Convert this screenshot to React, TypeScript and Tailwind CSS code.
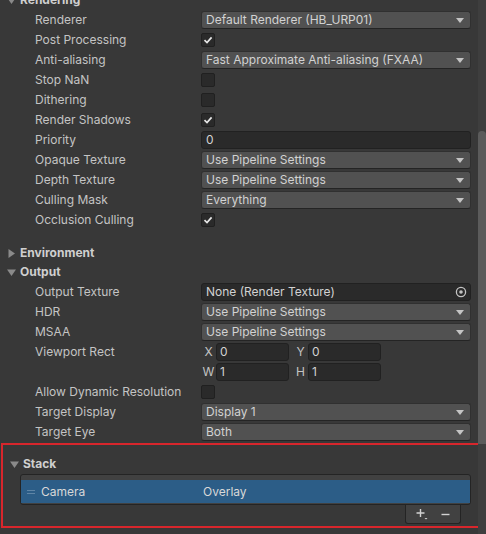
import React from 'react';

const font = { fontFamily: 'Inter, "Noto Sans", sans-serif' };

const Arrow = () => (
  <svg width="8" height="5" viewBox="0 0 8 5" className="shrink-0">
    <path d="M0 0 L8 0 L4 5 Z" fill="#c4c4c4" />
  </svg>
);

const Check = () => (
  <svg width="10" height="10" viewBox="0 0 10 10">
    <path d="M1.5 5.2 L4 7.6 L8.6 2.4" stroke="#e6e6e6" strokeWidth="1.7" fill="none" />
  </svg>
);

const Dropdown = ({ value }: { value: string }) => (
  <div className="flex-1 h-[18px] flex items-center justify-between pl-[4px] pr-[6px] rounded-[3px] bg-[#515151] border border-[#303030] border-b-[#242424] text-[#d2d2d2]">
    <span>{value}</span>
    <Arrow />
  </div>
);

const TextField = ({ value }: { value: string }) => (
  <div className="flex-1 h-[18px] flex items-center pl-[4px] rounded-[3px] bg-[#2a2a2a] border border-[#212121] text-[#d2d2d2]">
    {value}
  </div>
);

const CheckBox = ({ on }: { on?: boolean }) => (
  <div className="w-[14px] h-[14px] flex items-center justify-center rounded-[2px] bg-[#2a2a2a] border border-[#202020]">
    {on && <Check />}
  </div>
);

const Row = ({ label, children }: { label: string; children?: React.ReactNode }) => (
  <div className="h-[20px] flex items-center">
    <div className="w-[201px] pl-[35px] shrink-0 whitespace-nowrap text-[#c4c4c4]">{label}</div>
    <div className="flex-1 flex items-center pr-[7px]">{children}</div>
  </div>
);

const Header = ({ title, open }: { title: string; open?: boolean }) => (
  <div className="h-[20px] flex items-center pl-[7px] gap-[4px]">
    <svg width="9" height="9" viewBox="0 0 9 9">
      {open ? <path d="M0 1.5 L9 1.5 L4.5 8 Z" fill="#8a8a8a" /> : <path d="M1.5 0 L8 4.5 L1.5 9 Z" fill="#8a8a8a" />}
    </svg>
    <span className="font-bold text-[#cfcfcf]">{title}</span>
  </div>
);

const VecField = ({ axis, value }: { axis: string; value: string }) => (
  <div className="flex items-center w-[92px]">
    <span className="w-[15px] text-center text-[#c4c4c4]">{axis}</span>
    <div className="w-[73px] h-[18px] flex items-center pl-[3px] rounded-[3px] bg-[#2a2a2a] border border-[#212121] text-[#d2d2d2]">
      {value}
    </div>
  </div>
);

export default function App() {
  return (
    <div className="w-[486px] h-[534px] bg-[#383838] overflow-hidden flex text-[12px] leading-none" style={font}>
      <div className="w-[478px] shrink-0 flex flex-col">
        <div className="mt-[-10px]">
          <Header title="Rendering" open />
        </div>
        <Row label="Renderer"><Dropdown value="Default Renderer (HB_URP01)" /></Row>
        <Row label="Post Processing"><CheckBox on /></Row>
        <Row label="Anti-aliasing"><Dropdown value="Fast Approximate Anti-aliasing (FXAA)" /></Row>
        <Row label="Stop NaN"><CheckBox /></Row>
        <Row label="Dithering"><CheckBox /></Row>
        <Row label="Render Shadows"><CheckBox on /></Row>
        <Row label="Priority"><TextField value="0" /></Row>
        <Row label="Opaque Texture"><Dropdown value="Use Pipeline Settings" /></Row>
        <Row label="Depth Texture"><Dropdown value="Use Pipeline Settings" /></Row>
        <Row label="Culling Mask"><Dropdown value="Everything" /></Row>
        <Row label="Occlusion Culling"><CheckBox on /></Row>

        <div className="mt-[13px]">
          <Header title="Environment" />
        </div>
        <div className="mt-[-1px]">
          <Header title="Output" open />
        </div>
        <Row label="Output Texture">
          <div className="flex-1 h-[18px] flex items-center justify-between pl-[4px] pr-[3px] rounded-[3px] bg-[#2a2a2a] border border-[#212121] text-[#d2d2d2]">
            <span>None (Render Texture)</span>
            <svg width="12" height="12" viewBox="0 0 12 12">
              <circle cx="6" cy="6" r="4.6" stroke="#c4c4c4" strokeWidth="1.3" fill="none" />
              <circle cx="6" cy="6" r="1.8" fill="#c4c4c4" />
            </svg>
          </div>
        </Row>
        <Row label="HDR"><Dropdown value="Use Pipeline Settings" /></Row>
        <Row label="MSAA"><Dropdown value="Use Pipeline Settings" /></Row>
        <Row label="Viewport Rect">
          <div className="flex items-center">
            <VecField axis="X" value="0" />
            <VecField axis="Y" value="0" />
          </div>
        </Row>
        <Row label="">
          <div className="flex items-center">
            <VecField axis="W" value="1" />
            <VecField axis="H" value="1" />
          </div>
        </Row>
        <Row label="Allow Dynamic Resolution"><CheckBox /></Row>
        <Row label="Target Display"><Dropdown value="Display 1" /></Row>
        <Row label="Target Eye"><Dropdown value="Both" /></Row>

        <div className="mt-[1px] ml-[1px] mr-[-2px] h-[85px] border-2 border-[#d8262c] flex flex-col">
          <div className="mt-[9px]">
            <Header title="Stack" open />
          </div>
          <div className="ml-[17px] mr-[7px] h-[31px] border border-[#242424] rounded-[3px] bg-[#414141] pt-[5px] pb-[1px]">
            <div className="h-[23px] bg-[#2c5d87] flex items-center text-[#d8d8d8]">
              <div className="w-[20px] pl-[6px] flex flex-col gap-[2px]">
                <div className="w-[8px] h-[1px] bg-[#5f85a6]" />
                <div className="w-[8px] h-[1px] bg-[#5f85a6]" />
              </div>
              <span className="w-[162px]">Camera</span>
              <span>Overlay</span>
            </div>
          </div>
          <div className="self-end mr-[17px] w-[56px] h-[19px] bg-[#414141] border border-t-0 border-[#242424] rounded-b-[3px] flex items-center justify-center gap-[13px] text-[#d2d2d2]">
            <svg width="12" height="12" viewBox="0 0 12 12">
              <path d="M4.5 1 V9 M0.5 5 H8.5" stroke="#d2d2d2" strokeWidth="1.4" />
              <path d="M8.5 10 H11.5 L10 11.6 Z" fill="#d2d2d2" />
            </svg>
            <svg width="9" height="9" viewBox="0 0 9 9">
              <path d="M0.5 4.5 H8.5" stroke="#d2d2d2" strokeWidth="1.4" />
            </svg>
          </div>
        </div>
      </div>
      <div className="w-[8px] shrink-0 flex flex-col bg-[#3e3e3e]">
        <div className="mt-[131px] h-[313px] bg-[#5b5b5b] rounded-t-[4px]" />
      </div>
    </div>
  );
}
